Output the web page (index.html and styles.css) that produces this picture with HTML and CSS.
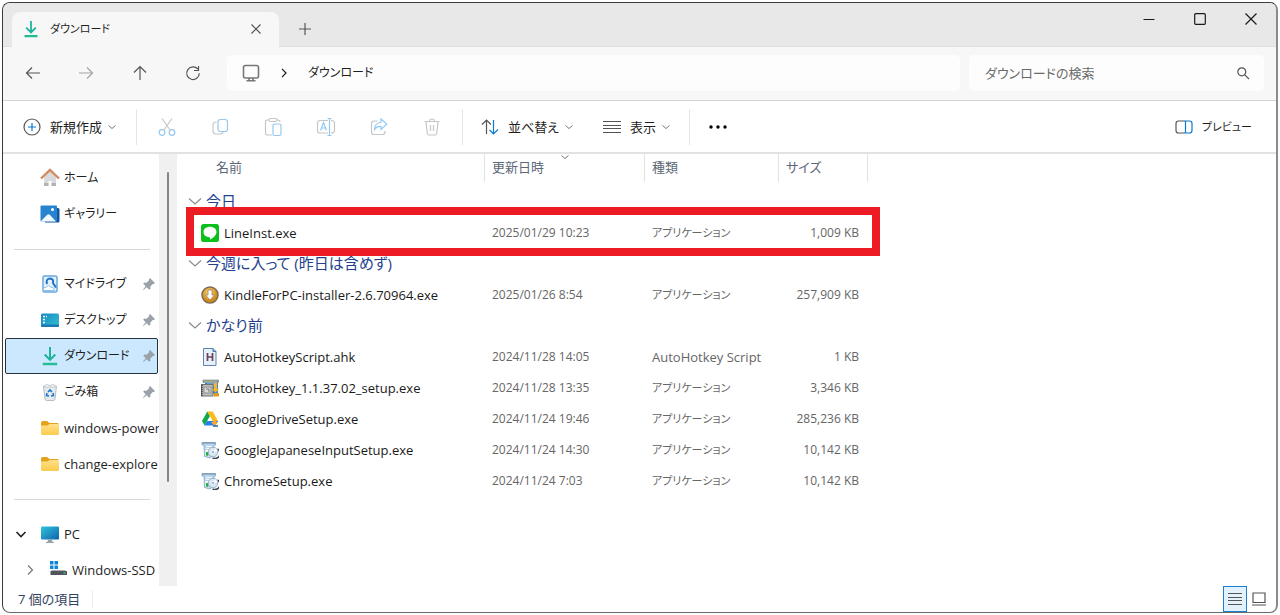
FILE: index.html
```html
<!DOCTYPE html>
<html lang="ja">
<head>
<meta charset="utf-8">
<meta name="viewport" content="width=device-width, initial-scale=1">
<title>ダウンロード</title>
<link rel="stylesheet" href="styles.css">
</head>
<body>
<svg class="defs" aria-hidden="true">
  <defs>
    <linearGradient id="g-screen" x1="0" y1="0" x2="1" y2="1"><stop offset="0" stop-color="#2fc3dc"/><stop offset="1" stop-color="#0f62ae"/></linearGradient>
    <linearGradient id="g-desk" x1="0" y1="0" x2="1" y2="1"><stop offset="0" stop-color="#1787c4"/><stop offset="1" stop-color="#36c3cf"/></linearGradient>
    <linearGradient id="g-folder" x1="0" y1="0" x2="0" y2="1"><stop offset="0" stop-color="#ffe08a"/><stop offset="1" stop-color="#fccb4e"/></linearGradient>
    <radialGradient id="g-gold" cx=".45" cy=".35"><stop offset="0" stop-color="#ffd77a"/><stop offset="1" stop-color="#d08a18"/></radialGradient>
    <symbol id="i-download" viewBox="0 0 18 18"><path d="M9 1v11M4.200 7.600 9 12.400l4.800-4.800" fill="none" stroke="#1fb39c" stroke-width="1.800"/><path d="M2.500 16.200h13" stroke="#22bd93" stroke-width="2.200"/></symbol>
    <symbol id="i-chev" viewBox="0 0 10 10"><path d="m1.500 3.500 3.500 3 3.500-3" fill="none" stroke="currentColor"/></symbol>
    <symbol id="i-pin" viewBox="0 0 14 14"><path d="m8 1 5 5-1.200 1-1-.1-2.500 2.500.1 2.400-1.200 1L4.700 10.300 1.500 13 1 12.500l2.700-3.200L1.200 6.800l1-1.200 2.400.1 2.500-2.500L7 2z" fill="#9aa1a8"/></symbol>
    <symbol id="i-folder" viewBox="0 0 20 18"><path d="M1 4q0-2 2-2h4l2.500 2H17q2 0 2 2v5H1z" fill="#e3a21a"/><path d="M1 6.500h6.500l2-1.500H19v9.500q0 1.500-1.500 1.500h-15Q1 16 1 14.500z" fill="url(#g-folder)"/></symbol>
    <symbol id="i-setup" viewBox="0 0 18 18"><path d="M1 1.500h13.500v2.500H13l-.5 10L9 17l-5.500-1.500L3 4H1z" fill="#b9d6ee" stroke="#7d9ab1" stroke-width=".7"/><path d="M1 2h13.500" stroke="#7296b3" stroke-width="1.200"/><path d="M5 5.500h6M5 7.500h4" stroke="#f3f9ff"/><path d="M4.500 9h3.500v6.500l-3.500-1z" fill="#fff"/><path d="M5 11h2.500v4L5 14.500z" fill="#1fae42"/><path d="M16.500 8a5 5 0 0 1-5 8.800" fill="none" stroke="#38434d" stroke-width="1.500"/><circle cx="12" cy="11" r="4.800" fill="#d9e6f2" stroke="#8fa6b8" stroke-width=".8"/><path d="m12 11 2.500-4 2 3z" fill="#fff"/><circle cx="12" cy="11" r="1.600" fill="#8db7dc" stroke="#fff" stroke-width=".7"/></symbol>
  </defs>
</svg>
<div class="window">
  <header class="titlebar">
    <div class="tab">
      <svg class="ic18"><use href="#i-download"/></svg>
      <span class="tab-name">ダウンロード</span>
      <button class="plain tab-close" aria-label="タブを閉じる"><svg viewBox="0 0 12 12" class="ic12"><path d="m1.500 1.500 9 9m0-9-9 9" class="ln"/></svg></button>
    </div>
    <button class="plain tab-new" aria-label="新しいタブ"><svg viewBox="0 0 12 12" class="ic12"><path d="M6 0v12M0 6h12" class="ln"/></svg></button>
    <div class="controls">
      <button class="plain" aria-label="最小化"><svg viewBox="0 0 12 12" class="ic12"><path d="M.500 6.500h11" class="ln dark"/></svg></button>
      <button class="plain" aria-label="最大化"><svg viewBox="0 0 12 12" class="ic12"><rect x=".7" y=".7" width="10.600" height="10.600" rx="1" class="ln dark"/></svg></button>
      <button class="plain" aria-label="閉じる"><svg viewBox="0 0 12 12" class="ic12"><path d="m.500.500 11 11m0-11-11 11" class="ln dark"/></svg></button>
    </div>
  </header>

  <div class="navbar">
    <div class="nav-buttons">
      <button class="plain" aria-label="戻る"><svg viewBox="0 0 18 18" class="ic18"><path d="M2.500 9H16M8 3.500 2.500 9 8 14.500" class="ln"/></svg></button>
      <button class="plain faded" aria-label="進む"><svg viewBox="0 0 18 18" class="ic18"><path d="M2 9h13.500M10 3.500 15.500 9 10 14.500" class="ln"/></svg></button>
      <button class="plain" aria-label="上へ"><svg viewBox="0 0 18 18" class="ic18"><path d="M9 16V2.500M3 8.500l6-6 6 6" class="ln"/></svg></button>
      <button class="plain" aria-label="最新の情報に更新"><svg viewBox="0 0 18 18" class="ic18"><path d="M15.300 9.200A6.300 6.300 0 1 1 13.700 5M14.500 2v4.500H10" class="ln"/></svg></button>
    </div>
    <nav class="address" aria-label="アドレス">
      <svg viewBox="0 0 18 18" class="ic18"><rect x="1.500" y="1.500" width="15" height="12.500" rx="2" class="ln monitor"/><path d="M7 14v2.500m4-2.500v2.500M4.500 16.700h9" class="ln monitor"/></svg>
      <svg viewBox="0 0 10 10" class="ic10"><path d="m3 .800 4 4.200-4 4.200" class="ln dark"/></svg>
      <a href="#">ダウンロード</a>
    </nav>
    <div class="search">
      <input type="text" aria-label="ダウンロードの検索" placeholder="ダウンロードの検索">
      <svg viewBox="0 0 14 14" class="ic14"><circle cx="5.800" cy="5.800" r="4" class="ln"/><path d="m8.800 8.800 4.200 4.200" class="ln"/></svg>
    </div>
  </div>

  <div class="toolbar">
    <button class="plain cmd new"><svg viewBox="0 0 18 18" class="ic18"><circle cx="9" cy="9" r="8" class="ln"/><path d="M9 5v8M5 9h8" class="ln blue"/></svg><span>新規作成</span><svg class="ic10 chev"><use href="#i-chev"/></svg></button>
    <div class="edit-tools">
      <button class="plain" disabled aria-label="切り取り"><svg viewBox="0 0 18 20" class="tool"><path d="M4 1.500 12 13m2-11.500L6 13" class="ln lg"/><circle cx="4" cy="15.500" r="2.800" class="ln lb"/><circle cx="14" cy="15.500" r="2.800" class="ln lb"/></svg></button>
      <button class="plain" disabled aria-label="コピー"><svg viewBox="0 0 18 20" class="tool"><path d="M5.500 5Q2 5 2 8v6q0 3 3 3h4q3 0 3-2.500" class="ln lg"/><rect x="7" y="2.500" width="9.500" height="12" rx="2.500" class="ln lb"/></svg></button>
      <button class="plain" disabled aria-label="貼り付け"><svg viewBox="0 0 18 20" class="tool"><path d="M8 18H3.500q-2 0-2-2V5q0-2 2-2H5m8 0h1q2 0 2 2" class="ln lg"/><rect x="5" y="1.500" width="8" height="3" rx="1.500" class="ln lg"/><rect x="9" y="7" width="8" height="11.500" rx="1.500" class="ln lb"/></svg></button>
      <button class="plain" disabled aria-label="名前の変更"><svg viewBox="0 0 20 20" class="tool"><path d="M12 3.500H4q-2.500 0-2.500 2.500v7.500Q1.500 16 4 16h8m3-12.500q3.500 0 3.500 2.500v7.500q0 2.500-3.500 2.500" class="ln lg"/><path d="m4.500 13.500 3-8 3 8m-5-2.500h4M11.500 1.500h4m-2 0v17m-2 0h4" class="ln lb"/></svg></button>
      <button class="plain" disabled aria-label="共有"><svg viewBox="0 0 18 20" class="tool"><path d="M7.500 4H4Q1.500 4 1.500 6.500V15q0 2.500 2.500 2.500h8.500q2.500 0 2.500-2.500v-1" class="ln lg"/><path d="M11 3.500V1.800l5.800 5.400-5.800 5.300V9.500q-4-.500-6.500 3Q4.700 6 11 5.500z" class="ln lb"/></svg></button>
      <button class="plain" disabled aria-label="削除"><svg viewBox="0 0 18 20" class="tool"><path d="M1.500 4.500h15M6.500 4.500q0-2.500 2.500-2.500t2.500 2.500M3 4.500l1.300 12q.2 1.500 1.700 1.500h6q1.500 0 1.700-1.500L15 4.500M7.500 8v6m3-6v6" class="ln lg"/></svg></button>
    </div>
    <button class="plain cmd sort"><svg viewBox="0 0 18 18" class="ic18"><path d="M5.500 16V2M1 6.500 5.500 2 10 6.500" class="ln"/><path d="M12.500 2v14m-4-4 4 4 4.500-4.500" class="ln blue"/></svg><span>並べ替え</span><svg class="ic10 chev"><use href="#i-chev"/></svg></button>
    <button class="plain cmd view"><svg viewBox="0 0 18 18" class="ic18"><path d="M0 3.500h18M0 7.500h18M0 10.500h18M0 14.500h18" class="ln"/></svg><span>表示</span><svg class="ic10 chev"><use href="#i-chev"/></svg></button>
    <button class="plain more" aria-label="詳細"><svg viewBox="0 0 18 18" class="ic18"><circle cx="2" cy="9" r="1.700"/><circle cx="9" cy="9" r="1.700"/><circle cx="16" cy="9" r="1.700"/></svg></button>
    <button class="plain cmd preview"><svg viewBox="0 0 18 18" class="ic18"><path d="M10 3H3.500Q1 3 1 5.500v7Q1 15 3.500 15H10" class="ln"/><path d="M10.500 3v12h4q2.500 0 2.500-2.500v-7Q17 3 14.500 3z" class="ln blue"/></svg><span>プレビュー</span></button>
  </div>

  <div class="content">
    <aside class="sidebar">
      <nav class="tree" aria-label="フォルダー">
        <a href="#" class="node kana"><svg viewBox="0 0 20 20" class="ic20"><path d="M4 9v9h4.500v-5h3v5H16V9l-6-6z" fill="#d8dadc"/><path d="M4 15v3h4.500v-3zm7.500 0v3H16v-3z" fill="#b0b4b8"/><path d="M1 10.500 10 2l9 8.500" fill="none" stroke="#d08a5e" stroke-width="2.400"/></svg><span>ホーム</span></a>
        <a href="#" class="node kana"><svg viewBox="0 0 20 20" class="ic20"><path d="M5 4h13q1.500 0 1.500 1.500v11.500q0 1.500-1.500 1.500H5z" fill="#16549e"/><rect x=".500" y="1.500" width="16.500" height="16" rx="1" fill="#2583cf"/><path d="m1 17 6-6q1.500-1.500 3 0l6 6.500H1z" fill="#f1f8ff"/><circle cx="12.500" cy="5.500" r="1.500" fill="#fff"/></svg><span>ギャラリー</span></a>
        <div class="rule"></div>
        <a href="#" class="node kana"><svg viewBox="0 0 20 20" class="ic20"><rect x="3" y="2" width="14" height="16" rx="1.500" fill="#e3f1fd" stroke="#6aa9e0" stroke-width="1.500"/><path d="M7 10q-1.500-5 3-5.500 4 .5 3 4.500l3 4.500" fill="none" stroke="#2374be" stroke-width="2"/><path d="M3 16.500q0-3.500 3.500-3.500 1.500-3 4 0 4 0 4 3.500z" fill="#fff" stroke="#8cc0ea"/></svg><span>マイドライブ</span><svg class="ic14 pin"><use href="#i-pin"/></svg></a>
        <a href="#" class="node kana"><svg viewBox="0 0 20 20" class="ic20"><rect x="1" y="3.500" width="18" height="13.500" rx="1.500" fill="url(#g-desk)"/><path d="M3 6.500h2m-2 3h2m1-3h1m-4 6h2" stroke="#fff" stroke-width="1.500"/><path d="M1 14.500h18V16q0 1-1 1H2q-1 0-1-1z" fill="#1a7ab5"/></svg><span>デスクトップ</span><svg class="ic14 pin"><use href="#i-pin"/></svg></a>
        <a href="#" class="node kana selected" aria-current="page"><svg class="ic20"><use href="#i-download"/></svg><span>ダウンロード</span><svg class="ic14 pin"><use href="#i-pin"/></svg></a>
        <a href="#" class="node kana"><svg viewBox="0 0 20 20" class="ic20"><path d="m3.500 4 1.500 13q.2 1.500 1.700 1.500h6.600q1.500 0 1.700-1.500L16.500 4z" fill="#e7eaed" stroke="#b6bdc3"/><path d="m4 5 3-3 3 2 3-2 3.500 3z" fill="#f9fafb" stroke="#c3c8cd"/><path d="m8 10 2-2 2 2m1 1 .500 2.500-2.500.500m-2 0-2.500-.500.500-2.500" fill="none" stroke="#1d7bd2" stroke-width="1.600"/></svg><span>ごみ箱</span><svg class="ic14 pin"><use href="#i-pin"/></svg></a>
        <a href="#" class="node"><svg class="ic20"><use href="#i-folder"/></svg><span>windows-power</span></a>
        <a href="#" class="node"><svg class="ic20"><use href="#i-folder"/></svg><span>change-explore</span></a>
        <div class="rule"></div>
        <a href="#" class="node root"><svg class="ic12 twist open" viewBox="0 0 12 12"><path d="m1.500 4 4.500 4.500L10.500 4" class="ln"/></svg><svg viewBox="0 0 20 20" class="ic20"><rect x="1" y="2.500" width="18" height="13" rx="1" fill="url(#g-screen)"/><path d="M8 15.500h4l.5 2.500H14v1H6v-1h1.500z" fill="#98a2ab"/></svg><span>PC</span></a>
        <a href="#" class="node drive"><svg class="ic12 twist" viewBox="0 0 12 12"><path d="M4 1.500 8.500 6 4 10.500" class="ln"/></svg><svg viewBox="0 0 20 20" class="ic20"><path d="M2 1h3.500v3.500H2zm4.500 0H10v3.500H6.500zM2 5.500h3.500V9H2zm4.500 0H10V9H6.500z" fill="#0f83d8"/><path d="m3 11 1-1h13l2 2z" fill="#a9aeb3"/><rect x="2.500" y="11" width="16.500" height="4" rx=".5" fill="#50565c"/><path d="M15.500 13h2" stroke="#52e28f"/></svg><span>Windows-SSD</span></a>
      </nav>
      <div class="scroll"><div class="thumb"></div></div>
    </aside>
    <main class="files">
      <table>
        <colgroup><col class="c-name"><col class="c-date"><col class="c-type"><col class="c-size"></colgroup>
        <thead>
          <tr>
            <th scope="col"><div class="head">名前</div></th>
            <th scope="col"><div class="head">更新日時<svg class="ic10 sorted"><use href="#i-chev"/></svg></div></th>
            <th scope="col"><div class="head">種類</div></th>
            <th scope="col"><div class="head">サイズ</div></th>
          </tr>
        </thead>
        <tbody>
          <tr><th colspan="4" scope="rowgroup"><div class="group"><svg class="ic14" viewBox="0 0 14 14"><path d="m1 4.500 6 5.500 6-5.500" class="ln"/></svg>今日</div></th></tr>
          <tr class="marked"><td><div class="file"><svg viewBox="0 0 18 18" class="ic18"><rect width="18" height="18" rx="2.500" fill="#0cc01c"/><path d="M9 2.800c4 0 6.500 2.300 6.500 5.200 0 3.300-3.800 6-6.500 7.800.3-1.300.2-2.300-.5-2.500C5 13 2.500 11 2.500 8 2.500 5.100 5 2.800 9 2.800z" fill="#fff"/></svg>LineInst.exe</div></td><td>2025/01/29 10:23</td><td class="kana-cell">アプリケーション</td><td>1,009 KB<div class="marker"></div></td></tr>
        </tbody>
        <tbody>
          <tr><th colspan="4" scope="rowgroup"><div class="group"><svg class="ic14" viewBox="0 0 14 14"><path d="m1 4.500 6 5.500 6-5.500" class="ln"/></svg>今週に入って (昨日は含めず)</div></th></tr>
          <tr><td><div class="file"><svg viewBox="0 0 18 18" class="ic18"><circle cx="9" cy="9" r="8" fill="url(#g-gold)" stroke="#7c6b55" stroke-width="1.500"/><path d="M7 4h4v5h2.500L9 14 4.500 9H7z" fill="#fff" stroke="#9b8768" stroke-width=".8"/></svg>KindleForPC-installer-2.6.70964.exe</div></td><td>2025/01/26 8:54</td><td class="kana-cell">アプリケーション</td><td>257,909 KB</td></tr>
        </tbody>
        <tbody>
          <tr><th colspan="4" scope="rowgroup"><div class="group"><svg class="ic14" viewBox="0 0 14 14"><path d="m1 4.500 6 5.500 6-5.500" class="ln"/></svg>かなり前</div></th></tr>
          <tr><td><div class="file"><svg viewBox="0 0 18 18" class="ic18"><path d="M2.500.500h9.500l3 3v14H2.500z" fill="#e6f0fa" stroke="#5c86ad"/><path d="M12 .500v3h3" fill="#7db4e8" stroke="#49749b"/><path d="M6.500 5v8m5-8v8m-5-4h5" fill="none" stroke="#6b4059" stroke-width="1.700"/></svg>AutoHotkeyScript.ahk</div></td><td>2024/11/28 14:05</td><td class="type-latin">AutoHotkey Script</td><td>1 KB</td></tr>
          <tr><td><div class="file"><svg viewBox="0 0 18 18" class="ic18"><path d="M2 1h15.500v2.500H2z" fill="#6c8fab" stroke="#7f93a3" stroke-width=".7"/><path d="M3 2.200h13" stroke="#e4c55b" stroke-width=".8"/><rect x="4" y="4" width="13" height="11" fill="#3f86d2"/><path d="M6 4.500h9v3H6z" fill="#8dbbe8"/><rect x=".500" y="5.500" width="11.500" height="11.500" fill="#bfc1bd" stroke="#6d7072"/><rect x="3" y="8" width="7" height="6" fill="#dcddd9" stroke="#8c8e8b"/><path d="M5 10h3v3" fill="none" stroke="#6f7a72"/><path d="M1 6v11" stroke="#3a3a3a" stroke-width="1.400" stroke-dasharray="1.200 .8"/><path d="M13 4h3v6h2l-3.500 3.500L11 10h2z" fill="#f7b52c"/><path d="M13 14h5v3.500h-5z" fill="#e09a1e"/></svg>AutoHotkey_1.1.37.02_setup.exe</div></td><td>2024/11/28 13:35</td><td class="kana-cell">アプリケーション</td><td>3,346 KB</td></tr>
          <tr><td><div class="file"><svg viewBox="0 0 18 18" class="ic18"><path d="M6.300 1.500 1 11l2.500 4.500L9 6z" fill="#12a94b"/><path d="M6.300 1.500h5.400L17 11h-5.200z" fill="#fbbc1a"/><path d="M6 11h11l-2.500 4.500h-11z" fill="#267ff0"/><path d="M12 10h3v2h2l-3.500 4-3.500-4h2z" fill="#f6ad22"/><path d="M12 16h5" stroke="#315c97" stroke-width="1.500"/></svg>GoogleDriveSetup.exe</div></td><td>2024/11/24 19:46</td><td class="kana-cell">アプリケーション</td><td>285,236 KB</td></tr>
          <tr><td><div class="file"><svg class="ic18"><use href="#i-setup"/></svg>GoogleJapaneseInputSetup.exe</div></td><td>2024/11/24 14:30</td><td class="kana-cell">アプリケーション</td><td>10,142 KB</td></tr>
          <tr><td><div class="file"><svg class="ic18"><use href="#i-setup"/></svg>ChromeSetup.exe</div></td><td>2024/11/24 7:03</td><td class="kana-cell">アプリケーション</td><td>10,142 KB</td></tr>
        </tbody>
      </table>
    </main>
  </div>

  <footer class="status">
    <span class="count">7 個の項目</span>
    <div class="modes">
      <button class="plain mode on" aria-label="詳細表示"><svg viewBox="0 0 14 14" class="ic14"><path d="M0 1.500h14M0 5.500h14M0 8.500h14M0 12.500h14" class="ln"/></svg></button>
      <button class="plain mode" aria-label="大アイコン"><svg viewBox="0 0 14 14" class="ic14"><path d="M1 1h12v9.500H1zM0 13h14" class="ln"/></svg></button>
    </div>
  </footer>
</div>
</body>
</html>
```
FILE: styles.css
```css
* { box-sizing: border-box; }

body {
  margin: 0;
  padding: 2px;
  background: #fff;
  color: #1f1f1f;
  font: 13px/18px "Open Sans", "Noto Sans CJK JP", sans-serif;
  font-feature-settings: "palt";
}

a { color: inherit; text-decoration: none; }
svg { display: block; flex: none; }

.defs { position: absolute; width: 0; height: 0; }
.ic10 { width: 10px; height: 10px; }
.ic12 { width: 12px; height: 12px; }
.ic14 { width: 14px; height: 14px; }
.ic18 { width: 18px; height: 18px; }
.ic20 { width: 20px; height: 20px; }
.tool { width: 20px; height: 20px; }

.ln { fill: none; stroke: #555; stroke-width: 1.2; }
.dark { stroke: #1a1a1a; }
.monitor { stroke: #777; stroke-width: 1.6; }
.blue { stroke: #0b78d0; }
.lg { stroke: #c6c6c6; }
.lb { stroke: #93c9f3; }

.plain {
  display: flex;
  align-items: center;
  justify-content: center;
  margin: 0;
  padding: 0;
  border: 0;
  background: none;
  color: inherit;
  font: inherit;
  font-feature-settings: inherit;
}

.window {
  display: flex;
  flex-direction: column;
  min-height: calc(100vh - 4px);
  border: 1px solid #3a3a3a;
  border-right: 2px solid #8a8a8a;
  border-bottom-color: #6a6a6a;
  border-radius: 8px;
  overflow: hidden;
}

/* Title bar */
.titlebar {
  display: flex;
  align-items: flex-end;
  height: 44px;
  padding-left: 9px;
  background: #e8e8e8;
  border-bottom: 1px solid #dedede;
}

.tab {
  display: flex;
  align-items: center;
  gap: 10px;
  width: 267px;
  height: 35px;
  margin-bottom: -1px;
  padding: 0 17px 2px 10px;
  border-radius: 8px 8px 0 0;
  background: #f7f7f7;
}

.tab-name { flex: 1; font-size: 11px; }
.tab-new { width: 52px; height: 34px; }
.controls { display: flex; align-self: flex-start; margin-left: auto; }
.controls button { width: 51px; height: 32px; }

/* Navigation bar */
.navbar {
  display: flex;
  align-items: center;
  height: 54px;
  padding: 0 12px 2px 3px;
  background: #f7f7f7;
  border-bottom: 1px solid #d4d4d4;
}

.nav-buttons { display: grid; grid-template-columns: repeat(4, 1fr); width: 214px; }
.nav-buttons button { height: 36px; }
.faded { opacity: .5; }

.address {
  display: flex;
  flex: 1;
  align-items: center;
  height: 36px;
  margin: 0 9px 0 7px;
  padding-left: 15px;
  gap: 19px;
  border-radius: 5px;
  background: #fdfdfd;
}
.address a { font-size: 12px; }

.search {
  display: flex;
  align-items: center;
  width: 295px;
  height: 36px;
  padding: 0 14px 0 16px;
  border-radius: 5px;
  background: #fdfdfd;
}

.search input {
  flex: 1;
  min-width: 0;
  padding: 0;
  border: 0;
  outline: 0;
  background: none;
  font: inherit;
  font-feature-settings: inherit;
}

.search input::placeholder { color: #6a6a6a; opacity: 1; }

/* Command bar */
.toolbar {
  display: flex;
  align-items: center;
  height: 53px;
  padding: 1px 24px 0 0;
  border-bottom: 2px solid #e2e2e2;
}

.toolbar > * { height: 36px; }
.cmd { justify-content: flex-start; gap: 9px; }
.cmd .chev { color: #777; margin-left: -4px; }
.new { width: 133px; padding-left: 20px; }
.edit-tools {
  display: grid;
  grid-template-columns: repeat(6, 1fr);
  width: 327px;
  padding: 0 3px;
  border: solid #e6e6e6;
  border-width: 0 1px;
}
.sort { width: 122px; padding-left: 18px; }
.view { width: 104px; padding-left: 18px; }
.more { width: 56px; border-left: 1px solid #e6e6e6; }
.preview { margin-left: auto; font-size: 11px; }

/* Body */
.content { display: flex; flex: 1; min-height: 0; }
.sidebar { display: flex; flex: none; width: 174px; }
.tree { flex: 1; min-width: 0; padding-top: 6px; height: 431px; overflow: hidden; }

.node {
  display: flex;
  align-items: center;
  gap: 4px;
  height: 36px;
  margin: 0 1px 0 2px;
  padding: 0 0 0 34px;
  border: 1px solid transparent;
  border-radius: 2px;
  white-space: nowrap;
}

.node.selected { background: #cce8ff; border-color: #26323c; }
.node span { flex: 1; min-width: 0; }
.kana { font-size: 12px; }
.root { padding-left: 9px; }
.root .twist { margin-right: 9px; }
.drive { padding-left: 18px; }
.drive .twist { margin-right: 8px; }
.twist .ln { stroke: #777; }
.twist.open .ln { stroke: #222; stroke-width: 1.6; }
.pin { margin-right: 1px; }

.rule { height: 34px; padding: 17px 9px 0 11px; }
.rule::before { content: ""; display: block; height: 1px; background: #d8d8d8; }

.scroll { width: 18px; padding: 18px 8px 0; background: #f0f0f0; }
.thumb { width: 2px; height: 310px; background: #858585; border-radius: 1px; }

/* File list */
.files { flex: 1; min-width: 0; padding-left: 4px; }

table { width: 687px; table-layout: fixed; border-collapse: collapse; }
.c-name { width: 304px; }
.c-date { width: 160px; }
.c-type { width: 134px; }
.c-size { width: 89px; }

th, td { height: 31px; padding: 0 7px; text-align: left; font-weight: 400; }
td { color: #666; font-size: 12px; white-space: nowrap; }
td:last-child { padding-right: 9px; text-align: right; }
td:first-child { color: #1a1a1a; font-size: 13px; padding-left: 20px; }
td.kana-cell { font-size: 11px; }
td.type-latin { font-size: 13px; }

thead th { height: 32px; padding: 0; vertical-align: top; }
.head {
  position: relative;
  height: 28px;
  padding: 4px 7px 0;
  border-right: 1px solid #e2e2e2;
  color: #5c6878;
}
th:first-child .head { padding-left: 35px; }
.sorted { position: absolute; top: -2px; left: 75px; color: #777; }

.group { display: flex; align-items: center; gap: 4px; padding-bottom: 2px; color: #24418f; font-size: 15px; }
.group .ln { stroke: #8a8a8a; }
.file { display: flex; align-items: center; gap: 5px; }

.marked { position: relative; }
.marker {
  position: absolute;
  inset: -10px -12px -8px 5px;
  border: 8px solid #ed1c24;
  pointer-events: none;
}

/* Status bar */
.status { display: flex; align-items: center; height: 26px; padding: 0 5px 0 15px; color: #30445e; }
.count { padding-right: 12px; border-right: 1px solid #ececec; }
.modes { display: flex; align-self: stretch; margin-left: auto; }
.mode { width: 24px; height: 26px; }
.mode.on { background: #e2f1fb; border: 1px solid #1a7fd0; }
```
